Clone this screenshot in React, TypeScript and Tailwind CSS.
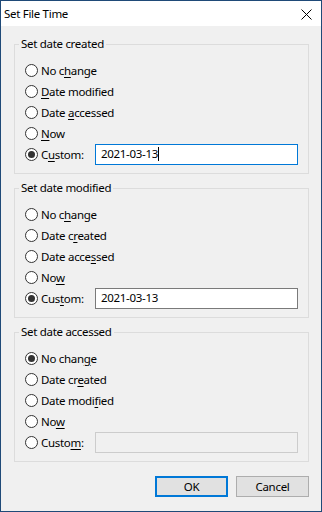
import type { ReactNode } from "react";

type Opt = { label: ReactNode; checked?: boolean };

function Radio({ checked }: { checked?: boolean }) {
  return (
    <span className="w-[13px] h-[13px] rounded-full border border-[#333333] bg-white flex items-center justify-center shrink-0">
      {checked && <span className="w-[7px] h-[7px] rounded-full bg-[#333333]" />}
    </span>
  );
}

function Mn({ pre, key_, post }: { pre: string; key_: string; post: string }) {
  return (
    <>
      {pre}
      <u className="underline-offset-[2px]">{key_}</u>
      {post}
    </>
  );
}

function Group({
  title,
  options,
  custom,
  customChecked,
  value,
  focused,
}: {
  title: string;
  options: Opt[];
  custom: ReactNode;
  customChecked?: boolean;
  value?: string;
  focused?: boolean;
}) {
  return (
    <div className="relative border border-[#dcdcdc] h-[130px] pt-[15px] pl-[10px] pr-[10px]">
      <span className="absolute -top-[9px] left-[4px] px-[2px] bg-[#f0f0f0] leading-[16px]">
        {title}
      </span>
      {options.map((o, i) => (
        <div key={i} className="h-[21px] flex items-center gap-[3px]">
          <Radio checked={o.checked} />
          <span className="leading-[15px]">{o.label}</span>
        </div>
      ))}
      <div className="h-[21px] flex items-center">
        <div className="w-[70px] flex items-center gap-[3px]">
          <Radio checked={customChecked} />
          <span className="leading-[15px]">{custom}</span>
        </div>
        {value !== undefined ? (
          <div
            className={
              focused
                ? "flex-1 h-[21px] -mt-[1px] border border-[#0078d7] bg-white flex items-center pl-[5px]"
                : "flex-1 h-[21px] -mt-[1px] border border-[#7a7a7a] bg-white flex items-center pl-[5px]"
            }
          >
            <span>{value}</span>
            {focused && <span className="w-[1px] h-[14px] bg-black" />}
          </div>
        ) : (
          <div className="flex-1 h-[21px] -mt-[1px] border border-[#cccccc] bg-[#f0f0f0]" />
        )}
      </div>
    </div>
  );
}

export default function App() {
  return (
    <div
      className="w-[322px] h-[512px] border border-[#1f4a78] bg-[#f0f0f0] flex flex-col text-[11.5px] tracking-[-0.3px] text-black"
      style={{ fontFamily: '"Noto Sans", sans-serif' }}
    >
      <div className="h-[25px] bg-white flex items-center justify-between pl-[3px] pr-[9px]">
        <span className="leading-[16px]">Set File Time</span>
        <svg width="11" height="11" viewBox="0 0 11 11" className="mt-[1px]">
          <path d="M0.5 0.5 L10.5 10.5 M10.5 0.5 L0.5 10.5" stroke="#000" strokeWidth="1" />
        </svg>
      </div>

      <div className="flex flex-col gap-[14px] pt-[18px] pl-[13px] pr-[12px]">
        <Group
          title="Set date created"
          options={[
            { label: <Mn pre="No c" key_="h" post="ange" /> },
            { label: <Mn pre="" key_="D" post="ate modified" /> },
            { label: <Mn pre="Date " key_="a" post="ccessed" /> },
            { label: <Mn pre="" key_="N" post="ow" /> },
          ]}
          custom={<Mn pre="C" key_="u" post="stom:" />}
          customChecked
          value="2021-03-13"
          focused
        />
        <Group
          title="Set date modified"
          options={[
            { label: <Mn pre="No c" key_="h" post="ange" /> },
            { label: <Mn pre="Date c" key_="r" post="eated" /> },
            { label: <Mn pre="Date acce" key_="s" post="sed" /> },
            { label: <Mn pre="No" key_="w" post="" /> },
          ]}
          custom={<Mn pre="Cus" key_="t" post="om:" />}
          customChecked
          value="2021-03-13"
        />
        <Group
          title="Set date accessed"
          options={[
            { label: <Mn pre="No chan" key_="g" post="e" />, checked: true },
            { label: <Mn pre="Date cr" key_="e" post="ated" /> },
            { label: <Mn pre="Date modi" key_="f" post="ied" /> },
            { label: <Mn pre="No" key_="w" post="" /> },
          ]}
          custom={<Mn pre="Custo" key_="m" post=":" />}
        />
      </div>

      <div className="flex justify-end gap-[8px] pt-[14px] pr-[12px]">
        <button className="w-[73px] h-[21px] bg-[#e1e1e1] border-2 border-[#0078d7] leading-[15px]">
          OK
        </button>
        <button className="w-[73px] h-[21px] bg-[#e1e1e1] border border-[#adadad] leading-[15px]">
          Cancel
        </button>
      </div>
    </div>
  );
}
